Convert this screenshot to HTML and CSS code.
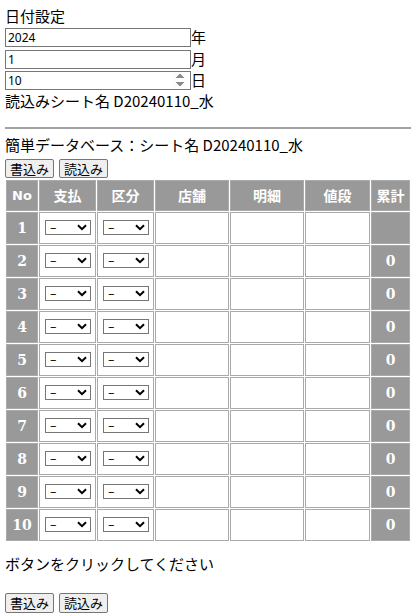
FILE: index.html
```html
<!DOCTYPE html>
<html lang="ja">
<head>
<meta charset="utf-8">
<title>簡単データベース</title>
<link rel="stylesheet" href="styles.css">
</head>
<body>
<div class="title">日付設定</div>
<div class="field"><input class="inp" type="text" value="2024"><span>年</span></div>
<div class="field"><input class="inp" type="text" value="1"><span>月</span></div>
<div class="field"><input class="inp" type="number" value="10"><span>日</span></div>
<div class="line sheet">読込みシート名 D20240110_水</div>
<hr class="rule">
<div class="line dbname">簡単データベース：シート名 D20240110_水</div>
<div class="btns top"><button class="btn">書込み</button><button class="btn">読込み</button></div>
<table class="grid">
<colgroup>
<col class="c-no"><col class="c-pay"><col class="c-kind"><col class="c-shop"><col class="c-item"><col class="c-price"><col class="c-sum">
</colgroup>
<thead>
<tr><th class="h-no">No</th><th>支払</th><th>区分</th><th>店舗</th><th>明細</th><th>値段</th><th>累計</th></tr>
</thead>
<tbody id="rows"></tbody>
</table>
<div class="line msg">ボタンをクリックしてください</div>
<div class="btns bottom"><button class="btn">書込み</button><button class="btn">読込み</button></div>
<script src="script.js"></script>
</body>
</html>
```
FILE: script.js
```js
(function () {
  var tb = document.getElementById('rows');
  var chev = '<svg class="chev" width="10" height="7" viewBox="0 0 10 7"><path d="M1 1.2 L5 5.2 L9 1.2" fill="none" stroke="#000" stroke-width="2"/></svg>';
  var sel = '<td class="sel"><span class="pickwrap"><select class="pick"><option>–</option></select>' + chev + '</span></td>';
  var html = '';
  for (var i = 1; i <= 10; i++) {
    html += '<tr>' +
      '<td class="num">' + i + '</td>' +
      sel + sel +
      '<td></td><td></td><td></td>' +
      '<td class="num">' + (i === 1 ? '' : '0') + '</td>' +
      '</tr>';
  }
  tb.innerHTML = html;
})();
```
FILE: styles.css
```css
body {
  margin: 5px;
  font-family: "Noto Sans CJK JP", "Noto Sans", sans-serif;
  font-size: 15px;
  color: #000;
  background: #fff;
}
.title {
  height: 22px;
  line-height: 22px;
}
.field {
  height: 21.5px;
  display: flex;
  align-items: flex-start;
}
.field span {
  line-height: 21px;
  margin-top: -1px;
}
.inp {
  box-sizing: border-box;
  width: 186px;
  height: 19px;
  margin: 1px 0 0 0;
  padding: 0 2px;
  border: 1px solid #767676;
  font-family: "Noto Sans", sans-serif;
  font-size: 12px;
  color: #000;
  background: #fff;
}
.inp::-webkit-inner-spin-button {
  opacity: 1;
}
.line {
  line-height: 22px;
  height: 22px;
}
.sheet {
  margin-top: -2px;
}
.rule {
  border: 0;
  height: 2px;
  background: #a3a3a3;
  margin: 15px -5px 0 0;
}
.dbname {
  margin-top: 5px;
}
.btns {
  display: flex;
  gap: 5px;
}
.top {
  margin-top: 3px;
}
.bottom {
  margin-top: 18px;
}
.btn {
  box-sizing: border-box;
  height: 19px;
  padding: 0 4px;
  border: 1px solid #767676;
  border-radius: 2px;
  background: #efefef;
  font-family: "Noto Sans CJK JP", sans-serif;
  font-size: 13px;
  line-height: 17px;
  color: #000;
}
.bottom .btn {
  height: 20px;
}
.grid {
  margin-top: 1px;
  width: 406px;
  table-layout: fixed;
  border-collapse: separate;
  border-spacing: 1px;
}
.c-no { width: 32px; }
.c-pay { width: 57px; }
.c-kind { width: 57px; }
.c-shop { width: 74px; }
.c-item { width: 74px; }
.c-price { width: 65px; }
.c-sum { width: 39px; }
.grid th {
  height: 29px;
  padding: 0;
  border: 1px solid #aaa;
  background: #999;
  color: #fff;
  font-family: "DejaVu Sans", "Noto Sans CJK JP", sans-serif;
  font-weight: bold;
  font-size: 14px;
  text-align: center;
}
.grid th.h-no {
  font-size: 13px;
}
.grid td {
  height: 30px;
  padding: 0;
  border: 1px solid #aaa;
  background: #fff;
}
.grid td.num {
  background: #999;
  color: #fff;
  font-family: "DejaVu Serif", serif;
  font-weight: bold;
  font-size: 14px;
  text-align: center;
}
.grid td.sel {
  padding: 0 0 0 5px;
}
.pickwrap {
  position: relative;
  display: block;
  width: 46px;
  height: 15px;
}
.pick {
  -webkit-appearance: none;
  appearance: none;
  box-sizing: border-box;
  display: block;
  width: 46px;
  height: 15px;
  margin: 0;
  padding: 0 0 0 4px;
  border: 1px solid #767676;
  border-radius: 0;
  background: #fff;
  font-family: "DejaVu Sans", sans-serif;
  font-size: 13px;
  line-height: 13px;
  color: #000;
}
.chev {
  position: absolute;
  right: 4px;
  top: 4px;
  pointer-events: none;
}
.msg {
  margin-top: 11px;
}
```
